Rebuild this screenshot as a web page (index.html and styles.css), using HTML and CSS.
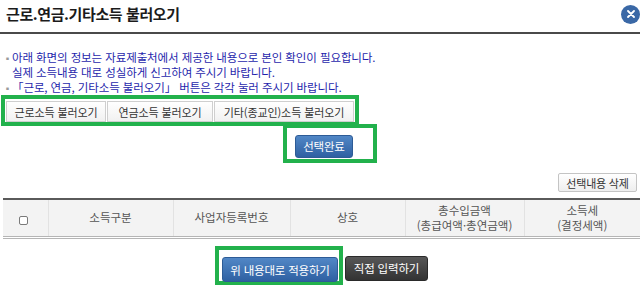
FILE: index.html
```html
<!DOCTYPE html>
<html lang="ko">
<head>
<meta charset="utf-8">
<title>근로.연금.기타소득 불러오기</title>
<link rel="stylesheet" href="styles.css">
</head>
<body>
<div class="dialog">
  <header class="head">
    <h1 class="title">근로.연금.기타소득 불러오기</h1>
    <button class="close" type="button" aria-label="닫기">
      <svg width="8" height="8" viewBox="0 0 8 8"><path d="M1 1L7 7M7 1L1 7" stroke="#fff" stroke-width="1.8" stroke-linecap="round"/></svg>
    </button>
  </header>

  <ul class="notice">
    <li class="bullet">아래 화면의 정보는 자료제출처에서 제공한 내용으로 본인 확인이 필요합니다.</li>
    <li>실제 소득내용 대로 성실하게 신고하여 주시기 바랍니다.</li>
    <li class="bullet">「근로, 연금, 기타소득 불러오기」 버튼은 각각 눌러 주시기 바랍니다.</li>
  </ul>

  <div class="hl hl-tabs">
    <div class="tabs">
      <button class="tab tab-1" type="button">근로소득 불러오기</button>
      <button class="tab tab-2" type="button">연금소득 불러오기</button>
      <button class="tab tab-3" type="button">기타(종교인)소득 불러오기</button>
    </div>
  </div>

  <div class="hl hl-done">
    <button class="btn btn-blue btn-done" type="button">선택완료</button>
  </div>

  <div class="toolbar">
    <button class="btn btn-white" type="button">선택내용 삭제</button>
  </div>

  <table class="grid">
    <colgroup>
      <col class="c1"><col class="c2"><col class="c3"><col class="c4"><col class="c5"><col class="c6">
    </colgroup>
    <thead>
      <tr>
        <th><input class="chk" type="checkbox" aria-label="전체선택"></th>
        <th>소득구분</th>
        <th>사업자등록번호</th>
        <th>상호</th>
        <th><span class="l">총수입금액</span><span class="l">(총급여액·총연금액)</span></th>
        <th><span class="l">소득세</span><span class="l">(결정세액)</span></th>
      </tr>
    </thead>
  </table>

  <div class="actions">
    <div class="hl hl-apply">
      <button class="btn btn-blue btn-apply" type="button">위 내용대로 적용하기</button>
    </div>
    <button class="btn btn-dark btn-direct" type="button">직접 입력하기</button>
  </div>
</div>
</body>
</html>
```

FILE: styles.css
```css
* { box-sizing: border-box; }

body {
  margin: 0;
  background: #fff;
  font-family: "Noto Sans CJK KR", "Noto Sans", sans-serif;
  color: #333;
}

.dialog {
  width: 640px;
  height: 290px;
  overflow: hidden;
}

/* header */
.head {
  height: 34px;
  border-bottom: 2px solid #4a4a4a;
  display: flex;
  align-items: center;
  justify-content: space-between;
  padding: 0 0 4px 6px;
}

.title {
  margin: 0;
  font-size: 15px;
  font-weight: 700;
  letter-spacing: -0.4px;
  color: #1b1b1b;
  line-height: 20px;
}

.close {
  width: 19px;
  height: 19px;
  border: none;
  border-radius: 50%;
  background: #3a68a6;
  padding: 0;
  display: flex;
  align-items: center;
  justify-content: center;
}

/* notice */
.notice {
  list-style: none;
  margin: 16px 0 0;
  padding: 0 0 0 12px;
  font-size: 11.5px;
  letter-spacing: -0.1px;
  line-height: 15px;
  color: #1f1fac;
}

.notice li {
  height: 15px;
}

.notice li.bullet::before {
  content: "▪";
  display: inline-block;
  width: 9px;
  margin-left: -9px;
  color: #9a9a9a;
  font-size: 9px;
  letter-spacing: 0;
}

/* highlight boxes */
.hl {
  border: 4px solid #22b14c;
}

.hl-tabs {
  margin-left: 1px;
  width: 358px;
  height: 31px;
  padding: 2px 0 0 1px;
}

.tabs {
  display: flex;
  gap: 1px;
}

.tab {
  height: 21px;
  padding: 0;
  border: 1px solid #cfcfcf;
  background: linear-gradient(#ffffff, #f1f1f1);
  font-family: inherit;
  font-size: 11px;
  letter-spacing: -0.1px;
  color: #333;
}

.tab-1 { width: 100px; }
.tab-2 { width: 106px; }
.tab-3 { width: 140px; }

.hl-done {
  margin: -2px 0 0 283px;
  width: 94px;
  height: 39px;
  padding: 4px 0 0 8px;
}

/* buttons */
.btn {
  font-family: inherit;
  font-size: 11.5px;
  letter-spacing: -0.2px;
  padding: 0;
  cursor: pointer;
}

.btn-blue {
  color: #fff;
  background: linear-gradient(#5187c6, #2f60a2);
  border: 1px solid #2d5b96;
  border-radius: 3px;
}

.btn-done {
  width: 58px;
  height: 23px;
}

.btn-white {
  width: 79px;
  height: 19px;
  font-size: 11px;
  color: #333;
  background: linear-gradient(#ffffff, #eeeeee);
  border: 1px solid #c4c4c4;
  border-radius: 2px;
}

.btn-dark {
  color: #fff;
  background: linear-gradient(#575757, #333333);
  border: 1px solid #2a2a2a;
  border-radius: 3px;
}

.toolbar {
  display: flex;
  justify-content: flex-end;
  padding-right: 3px;
  margin-top: 10px;
}

/* table */
.grid {
  margin: 6px 0 0 3px;
  width: 637px;
  border-collapse: collapse;
  table-layout: fixed;
  border-top: 2px solid #5a5a5a;
  border-bottom: 3px double #b5b5b5;
}

.c1 { width: 45px; }
.c2 { width: 125px; }
.c3 { width: 117px; }
.c4 { width: 115px; }
.c5 { width: 119px; }
.c6 { width: 116px; }

.grid th {
  height: 38px;
  padding: 0;
  background: #f3f3f3;
  border-left: 1px solid #e2e2e2;
  font-weight: 400;
  font-size: 11.5px;
  letter-spacing: 0;
  line-height: 15px;
  color: #555;
  text-align: center;
  vertical-align: middle;
}

.grid th .l {
  display: block;
  height: 15px;
}

.grid th:first-child { border-left: none; }

.chk {
  appearance: none;
  -webkit-appearance: none;
  margin: 3px 0 0 -3px;
  width: 9px;
  height: 9px;
  border: 1px solid #7a7a7a;
  border-radius: 2px;
  background: #fff;
  vertical-align: middle;
}

/* bottom actions */
.actions {
  display: flex;
  align-items: flex-start;
  margin: 7px 0 0 215px;
}

.hl-apply {
  width: 128px;
  height: 39px;
  padding: 6px 0 0 3px;
}

.btn-apply {
  width: 116px;
  height: 25px;
}

.btn-direct {
  width: 83px;
  height: 25px;
  margin: 10px 0 0 2px;
}
```
